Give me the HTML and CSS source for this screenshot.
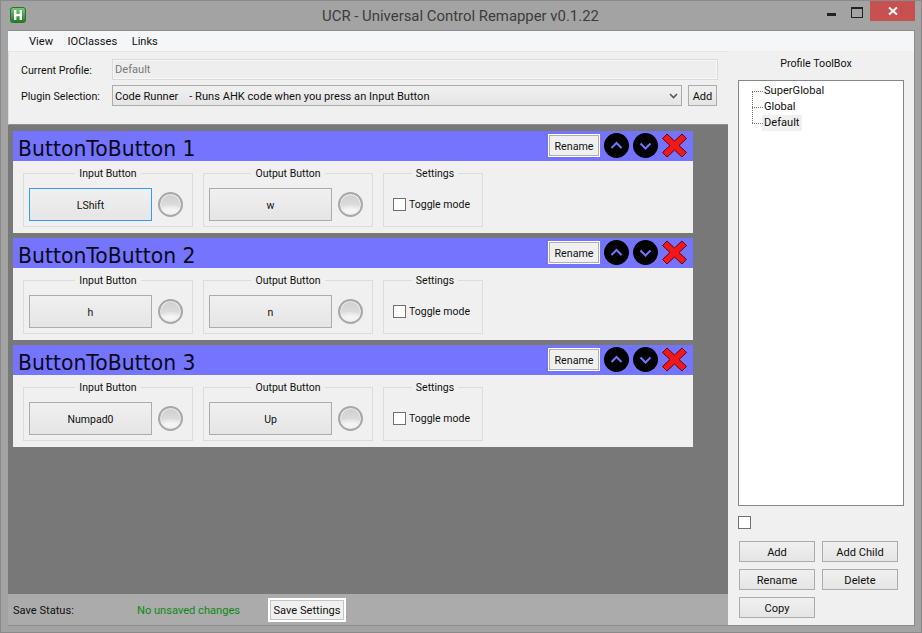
FILE: index.html
```html
<!DOCTYPE html>
<html lang="en">
<head>
<meta charset="utf-8">
<title>UCR - Universal Control Remapper v0.1.22</title>
<link rel="stylesheet" href="styles.css">
</head>
<body>
<div class="window">
  <header class="titlebar">
    <svg class="logo" width="16" height="16" viewBox="0 0 16 16"><defs><linearGradient id="lg" x1="0" y1="0" x2="0" y2="1"><stop offset="0" stop-color="#7fc77a"/><stop offset="1" stop-color="#1d7a22"/></linearGradient></defs><rect x="0.5" y="0.5" width="15" height="15" rx="2.5" fill="url(#lg)" stroke="#2f6f33"/><rect x="4" y="3" width="2.4" height="10" fill="#fff"/><rect x="9.6" y="3" width="2.4" height="10" fill="#fff"/><rect x="4" y="7" width="8" height="2.2" fill="#fff"/></svg>
    <div class="title">UCR - Universal Control Remapper v0.1.22</div>
    <div class="controls">
      <span class="ctl"><span class="min"></span></span>
      <span class="ctl"><span class="max"></span></span>
      <span class="close"><svg width="10" height="10" viewBox="0 0 10 10"><path d="M1 1.5 L9 8.5 M9 1.5 L1 8.5" stroke="#fff" stroke-width="2"/></svg></span>
    </div>
  </header>
  <div class="client">
    <nav class="menu"><span>View</span><span>IOClasses</span><span>Links</span></nav>
    <div class="workarea">
      <div class="main">
        <section class="toppanel">
          <div class="row">
            <label class="rowlabel">Current Profile:</label>
            <input class="profile" value="Default" disabled>
          </div>
          <div class="row">
            <label class="rowlabel">Plugin Selection:</label>
            <div class="select"><span class="selecttext">Code Runner&nbsp;&nbsp;&nbsp;&nbsp;- Runs AHK code when you press an Input Button</span>
              <svg width="9" height="6" viewBox="0 0 9 6"><path d="M1 1 L4.5 4.5 L8 1" fill="none" stroke="#555" stroke-width="1.6"/></svg>
            </div>
            <button class="btn add">Add</button>
          </div>
        </section>
        <section class="scroll">
          <article class="card">
            <div class="cardhead"><h2>ButtonToButton 1</h2>
              <div class="tools">
                <button class="btn rename">Rename</button>
                <svg class="round" viewBox="0 0 25 25"><circle cx="12.5" cy="12.5" r="12.5" fill="#000"/><path d="M7.5 15 L12.5 10 L17.5 15" fill="none" stroke="#7474ff" stroke-width="2"/></svg>
                <svg class="round" viewBox="0 0 25 25"><circle cx="12.5" cy="12.5" r="12.5" fill="#000"/><path d="M7.5 10.5 L12.5 15.5 L17.5 10.5" fill="none" stroke="#7474ff" stroke-width="2"/></svg>
                <svg class="round" viewBox="0 0 25 25"><path d="M5 1 L12.5 8 L20 1 L24.5 5.5 L17 12.5 L24.5 19.5 L20 24 L12.5 17 L5 24 L0.5 19.5 L8 12.5 L0.5 5.5 Z" fill="#f01818" stroke="#600" stroke-width="1"/></svg>
              </div>
            </div>
            <div class="cardbody">
              <fieldset class="group io"><legend>Input Button</legend><button class="bind focus">LShift</button><span class="led"></span></fieldset>
              <fieldset class="group io"><legend>Output Button</legend><button class="bind">w</button><span class="led"></span></fieldset>
              <fieldset class="group settings"><legend>Settings</legend><label class="check"><span class="box"></span>Toggle mode</label></fieldset>
            </div>
          </article>
          <article class="card">
            <div class="cardhead"><h2>ButtonToButton 2</h2>
              <div class="tools">
                <button class="btn rename">Rename</button>
                <svg class="round" viewBox="0 0 25 25"><circle cx="12.5" cy="12.5" r="12.5" fill="#000"/><path d="M7.5 15 L12.5 10 L17.5 15" fill="none" stroke="#7474ff" stroke-width="2"/></svg>
                <svg class="round" viewBox="0 0 25 25"><circle cx="12.5" cy="12.5" r="12.5" fill="#000"/><path d="M7.5 10.5 L12.5 15.5 L17.5 10.5" fill="none" stroke="#7474ff" stroke-width="2"/></svg>
                <svg class="round" viewBox="0 0 25 25"><path d="M5 1 L12.5 8 L20 1 L24.5 5.5 L17 12.5 L24.5 19.5 L20 24 L12.5 17 L5 24 L0.5 19.5 L8 12.5 L0.5 5.5 Z" fill="#f01818" stroke="#600" stroke-width="1"/></svg>
              </div>
            </div>
            <div class="cardbody">
              <fieldset class="group io"><legend>Input Button</legend><button class="bind">h</button><span class="led"></span></fieldset>
              <fieldset class="group io"><legend>Output Button</legend><button class="bind">n</button><span class="led"></span></fieldset>
              <fieldset class="group settings"><legend>Settings</legend><label class="check"><span class="box"></span>Toggle mode</label></fieldset>
            </div>
          </article>
          <article class="card">
            <div class="cardhead"><h2>ButtonToButton 3</h2>
              <div class="tools">
                <button class="btn rename">Rename</button>
                <svg class="round" viewBox="0 0 25 25"><circle cx="12.5" cy="12.5" r="12.5" fill="#000"/><path d="M7.5 15 L12.5 10 L17.5 15" fill="none" stroke="#7474ff" stroke-width="2"/></svg>
                <svg class="round" viewBox="0 0 25 25"><circle cx="12.5" cy="12.5" r="12.5" fill="#000"/><path d="M7.5 10.5 L12.5 15.5 L17.5 10.5" fill="none" stroke="#7474ff" stroke-width="2"/></svg>
                <svg class="round" viewBox="0 0 25 25"><path d="M5 1 L12.5 8 L20 1 L24.5 5.5 L17 12.5 L24.5 19.5 L20 24 L12.5 17 L5 24 L0.5 19.5 L8 12.5 L0.5 5.5 Z" fill="#f01818" stroke="#600" stroke-width="1"/></svg>
              </div>
            </div>
            <div class="cardbody">
              <fieldset class="group io"><legend>Input Button</legend><button class="bind">Numpad0</button><span class="led"></span></fieldset>
              <fieldset class="group io"><legend>Output Button</legend><button class="bind">Up</button><span class="led"></span></fieldset>
              <fieldset class="group settings"><legend>Settings</legend><label class="check"><span class="box"></span>Toggle mode</label></fieldset>
            </div>
          </article>
        </section>
        <footer class="status">
          <span class="statuslabel">Save Status:</span>
          <span class="saved">No unsaved changes</span>
          <button class="btn save">Save Settings</button>
        </footer>
      </div>
      <aside class="toolbox">
        <div class="boxtitle">Profile ToolBox</div>
        <ul class="tree">
          <li>SuperGlobal</li>
          <li>Global</li>
          <li><span class="selected">Default</span></li>
        </ul>
        <span class="box lone"></span>
        <div class="actions">
          <button class="btn">Add</button>
          <button class="btn">Add Child</button>
          <button class="btn">Rename</button>
          <button class="btn">Delete</button>
          <button class="btn">Copy</button>
        </div>
      </aside>
    </div>
  </div>
</div>
</body>
</html>
```
FILE: styles.css
```css
* { box-sizing: border-box; }
html, body { margin: 0; padding: 0; }
body {
  font-family: Roboto, "Noto Sans", "Liberation Sans", sans-serif;
  font-size: 11.1px;
  color: #111;
}
button, input { font: inherit; color: inherit; }

.window {
  width: 922px;
  height: 633px;
  background: #a3a3a3;
  border: 1px solid #8a8a8a;
  display: flex;
  flex-direction: column;
  overflow: hidden;
}
.titlebar {
  height: 29px;
  flex: none;
  position: relative;
  display: flex;
  align-items: center;
  padding-left: 9px;
}
.logo { margin-top: -1px; }
.title {
  position: absolute;
  left: 0;
  right: 0;
  top: 4px;
  text-align: center;
  font-size: 14.9px;
  line-height: 22px;
  color: #3c3c3c;
  padding-right: 1px;
}
.controls {
  position: absolute;
  top: 0;
  right: 6px;
  display: flex;
  align-items: flex-start;
}
.ctl { width: 26px; height: 20px; display: flex; align-items: center; justify-content: center; }
.min { width: 9px; height: 3px; background: #222; margin-top: 7px; }
.max { width: 10px; height: 8px; border: 1px solid #222; border-top-width: 2px; box-sizing: content-box; margin-top: 2px; }
.close {
  width: 45px;
  height: 20px;
  background: #c75050;
  display: flex;
  align-items: center;
  justify-content: center;
}

.client {
  flex: 1;
  margin: 0 6px 6px 7px;
  border: 1px solid #8c8c8c;
  border-left: 0;
  display: flex;
  flex-direction: column;
  min-height: 0;
}
.menu {
  height: 20px;
  flex: none;
  background: #f5f6f7;
  display: flex;
  align-items: center;
  gap: 14.5px;
  padding-left: 21px;
}
.workarea { flex: 1; display: flex; min-height: 0; }
.main { width: 720px; flex: none; display: flex; flex-direction: column; min-height: 0; }

.toppanel {
  height: 74px;
  flex: none;
  background: #f0f0f0;
  border-bottom: 1px solid #8f8f8f;
  border-top: 1px solid #e4e4e4;
  border-left: 1px solid #ddd;
  padding: 7px 10px 0 11px;
  display: flex;
  flex-direction: column;
  gap: 5px;
}
.row { display: flex; align-items: center; height: 21px; }
.rowlabel { width: 92px; flex: none; padding: 2px 0 0 1px; font-size: 10.7px; }
.profile {
  flex: 1;
  height: 21px;
  min-width: 0;
  border: 1px solid #d9d9d9;
  background: #eeeeee;
  box-shadow: inset 0 0 0 1px #f8f8f8;
  color: #7a7a7a;
  padding: 0 2px;
}
.select {
  width: 570px;
  height: 21px;
  border: 1px solid #acacac;
  background: linear-gradient(#f0f0f0, #e5e5e5);
  display: flex;
  align-items: center;
  justify-content: space-between;
  padding: 1px 3px 0 2px;
}
.selecttext { white-space: pre; }
.btn {
  border: 1px solid #acacac;
  background: linear-gradient(#f0f0f0, #e5e5e5);
  padding: 1px 0 0;
  margin: 0;
  display: flex;
  align-items: center;
  justify-content: center;
}
.add { width: 29px; height: 21px; margin-left: 6px; }

.scroll {
  flex: 1;
  min-height: 0;
  background: #787878;
  padding: 6px 0 0 5px;
  display: flex;
  flex-direction: column;
  gap: 5px;
}
.card { width: 680px; height: 102px; flex: none; background: #f0f0f0; }
.cardhead {
  height: 30px;
  background: #7474ff;
  display: flex;
  align-items: center;
  justify-content: space-between;
  padding: 0 6px 0 5px;
}
.cardhead h2 {
  margin: 0;
  font-family: "DejaVu Sans", Verdana, sans-serif;
  font-weight: 400;
  font-size: 20.4px;
  line-height: 30px;
  color: #0a0a1a;
  padding-top: 3px;
  height: 30px;
}
.tools { display: flex; align-items: center; gap: 4px; margin-top: -1px; }
.rename {
  width: 52px;
  height: 23px;
  border: 1px solid #fff;
  box-shadow: inset 0 0 0 1px #b0b0b0;
  background: #f0f0f0;
  font-size: 10.7px;
}
.round { width: 25px; height: 25px; display: block; }

.cardbody {
  height: 72px;
  padding: 5px 0 0 10px;
  display: flex;
  gap: 10px;
}
.group {
  margin: 0;
  height: 61px;
  padding: 8px 5px 5px;
  border: 1px solid #dcdcdc;
  display: flex;
  align-items: center;
  min-inline-size: 0;
  font-size: 10.5px;
}
.group legend {
  padding: 2px 4px 0;
  line-height: 12px;
  margin: 0 auto;
  text-align: center;
}
.io { width: 170px; gap: 6px; }
.settings { width: 100px; padding-left: 9px; }
.bind {
  width: 123px;
  height: 33px;
  border: 1px solid #acacac;
  background: linear-gradient(#f0f0f0, #e5e5e5);
  padding: 1px 0 0;
  flex: none;
}
.bind.focus { border-color: #3399ff; }
.led {
  width: 25px;
  height: 25px;
  border-radius: 50%;
  flex: none;
  border: 2px solid #a8a8a8;
  box-shadow: inset 0 0 0 1px #efefef;
  background: radial-gradient(ellipse 26px 18px at 50% 115%, #f4f4f4 0 50%, #e2e2e2 72%, transparent 76%), linear-gradient(#cfcfcf, #e6e6e6);
}
.check { display: flex; align-items: center; gap: 3px; white-space: nowrap; }
.box {
  width: 13px;
  height: 13px;
  border: 1px solid #707070;
  background: #fff;
  display: block;
  flex: none;
}

.status {
  flex: none;
  height: 31px;
  background: #ababab;
  display: flex;
  align-items: center;
  padding-left: 5px;
}
.statuslabel { width: 124px; flex: none; padding-top: 2px; }
.saved { width: 131px; flex: none; color: #0a8a14; padding-top: 2px; }
.save {
  width: 78px;
  height: 24px;
  border: 2px solid #fff;
  background: #f0f0f0;
  box-shadow: inset 0 0 0 1px #c4c4c4;
}

.toolbox {
  flex: 1;
  background: #f0f0f0;
  padding: 0 10px;
  display: flex;
  flex-direction: column;
}
.boxtitle { height: 29px; line-height: 25px; text-align: center; padding-right: 10px; font-size: 10.7px; }
.tree {
  list-style: none;
  margin: 0;
  padding: 2px 0 0 25px;
  height: 426px;
  flex: none;
  width: 166px;
  background: #fff;
  border: 1px solid #82878f;
}
.tree li { height: 16px; line-height: 16px; position: relative; }
.tree li::before {
  content: "";
  position: absolute;
  left: -12px;
  top: 8px;
  width: 11px;
  border-top: 1px dotted #777;
}
.tree li::after {
  content: "";
  position: absolute;
  left: -12px;
  top: -8px;
  height: 16px;
  border-left: 1px dotted #777;
}
.tree li:first-child::after { display: none; }
.selected { background: #f0f0f0; display: inline-block; padding: 0 2px; margin-left: -2px; }
.lone { margin-top: 10px; }
.actions {
  margin-top: 12px;
  margin-left: 1px;
  display: grid;
  grid-template-columns: 76px 76px;
  grid-auto-rows: 21px;
  column-gap: 7px;
  row-gap: 7px;
}
```
